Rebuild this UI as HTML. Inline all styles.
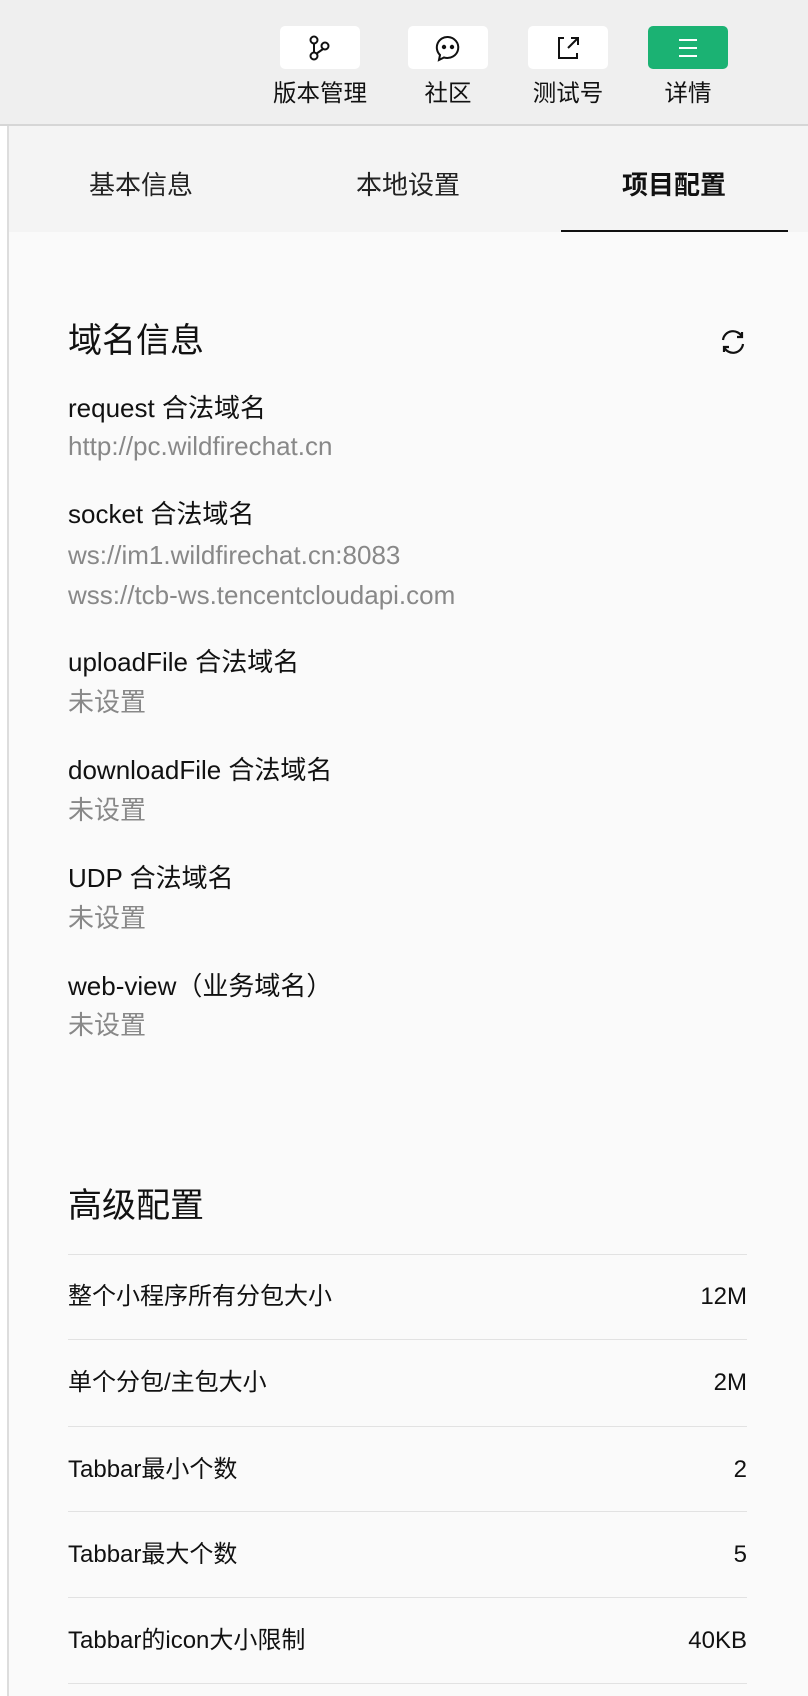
<!DOCTYPE html>
<html><head><meta charset="utf-8"><style>
*{margin:0;padding:0;box-sizing:border-box}
body{width:808px;height:1696px;position:relative;overflow:hidden;background:#fafafa;font-family:"Liberation Sans","Noto Sans CJK SC",sans-serif;color:#111;line-height:1.3}
.hdr{position:absolute;left:0;top:0;width:808px;height:126px;background:#efefef;border-bottom:2px solid #d6d6d6}
.btn{position:absolute;top:26px;width:80px;height:43px;background:#fff;border-radius:5px;display:flex;align-items:center;justify-content:center}
.lbl{position:absolute;top:78px;width:120px;text-align:center;font-size:23.5px;color:#111}
.left{position:absolute;left:0;top:126px;width:9px;height:1570px;background:#fff;border-right:2px solid #ddd}
.tabs{position:absolute;left:9px;top:126px;width:799px;height:106px;background:#f4f4f4}
.tab{position:absolute;top:169px;font-size:26px;color:#222;transform:translateX(-50%);white-space:nowrap}
.ul{position:absolute;left:561px;top:230px;width:227px;height:2px;background:#111}
.t{position:absolute;left:68px;white-space:nowrap}
.h{font-size:34px;color:#111}
.l{font-size:26px;color:#111}
.v{font-size:26px;color:#888}
.s{font-size:24px;color:#111}
.line{position:absolute;left:68px;width:679px;height:1px;background:#e2e2e2}
.r{position:absolute;right:61px;font-size:24px;color:#111}
</style></head><body>
<div class="hdr">
 <div class="btn" style="left:280px"><svg width="24" height="26" viewBox="0 0 24 26" fill="none" stroke="#111" stroke-width="2"><circle cx="6" cy="5" r="3.5"/><circle cx="6" cy="21" r="3.5"/><circle cx="17" cy="11" r="3.5"/><path d="M6 8.5v9M15 14l-7 5"/></svg></div>
 <div class="btn" style="left:408px"><svg width="30" height="30" viewBox="0 0 30 30" fill="none" stroke="#111" stroke-width="2"><path d="M15 4a11 10.5 0 1 1-4 20.5L6 27l1-5A10.5 10.5 0 0 1 15 4z"/><circle cx="11" cy="14" r="1.2" fill="#111"/><circle cx="19" cy="14" r="1.2" fill="#111"/></svg></div>
 <div class="btn" style="left:528px"><svg width="26" height="26" viewBox="0 0 26 26" fill="none" stroke="#111" stroke-width="2"><path d="M9 3H4v20h18v-5M13 13L23 3M16 3h7v7"/></svg></div>
 <div class="btn" style="left:648px;background:#1bb273"><svg width="22" height="22" viewBox="0 0 22 22" stroke="#fff" stroke-width="2"><path d="M2 3h18M2 11h18M2 19h18"/></svg></div>
 <div class="lbl" style="left:260px">版本管理</div>
 <div class="lbl" style="left:388px">社区</div>
 <div class="lbl" style="left:508px">测试号</div>
 <div class="lbl" style="left:628px">详情</div>
</div>
<div class="left"></div>
<div class="tabs"></div>
<div class="tab" style="left:141px">基本信息</div>
<div class="tab" style="left:408px">本地设置</div>
<div class="tab" style="left:674px;font-weight:bold;color:#111">项目配置</div>
<div class="ul"></div>

<div class="t h" style="top:319px">域名信息</div>
<svg style="position:absolute;left:719px;top:328px" width="28" height="28" viewBox="0 0 28 28" fill="none" stroke="#111" stroke-width="2.2"><path d="M4 12A10 10 0 0 1 23 9M24 16A10 10 0 0 1 5 19"/><path d="M23 4v5h-5M5 24v-5h5"/></svg>
<div class="t l" style="top:392px">request 合法域名</div>
<div class="t v" style="top:430px">http://pc.wildfirechat.cn</div>
<div class="t l" style="top:498px">socket 合法域名</div>
<div class="t v" style="top:539px">ws://im1.wildfirechat.cn:8083</div>
<div class="t v" style="top:579px">wss://tcb-ws.tencentcloudapi.com</div>
<div class="t l" style="top:646px">uploadFile 合法域名</div>
<div class="t v" style="top:686px">未设置</div>
<div class="t l" style="top:754px">downloadFile 合法域名</div>
<div class="t v" style="top:794px">未设置</div>
<div class="t l" style="top:862px">UDP 合法域名</div>
<div class="t v" style="top:902px">未设置</div>
<div class="t l" style="top:970px">web-view（业务域名）</div>
<div class="t v" style="top:1009px">未设置</div>

<div class="t h" style="top:1184px">高级配置</div>
<div class="line" style="top:1254px"></div>
<div class="t s" style="top:1281px">整个小程序所有分包大小</div><div class="r" style="top:1281px">12M</div>
<div class="line" style="top:1339px"></div>
<div class="t s" style="top:1367px">单个分包/主包大小</div><div class="r" style="top:1367px">2M</div>
<div class="line" style="top:1426px"></div>
<div class="t s" style="top:1454px">Tabbar最小个数</div><div class="r" style="top:1454px">2</div>
<div class="line" style="top:1511px"></div>
<div class="t s" style="top:1539px">Tabbar最大个数</div><div class="r" style="top:1539px">5</div>
<div class="line" style="top:1597px"></div>
<div class="t s" style="top:1625px">Tabbar的icon大小限制</div><div class="r" style="top:1625px">40KB</div>
<div class="line" style="top:1683px"></div>
</body></html>
